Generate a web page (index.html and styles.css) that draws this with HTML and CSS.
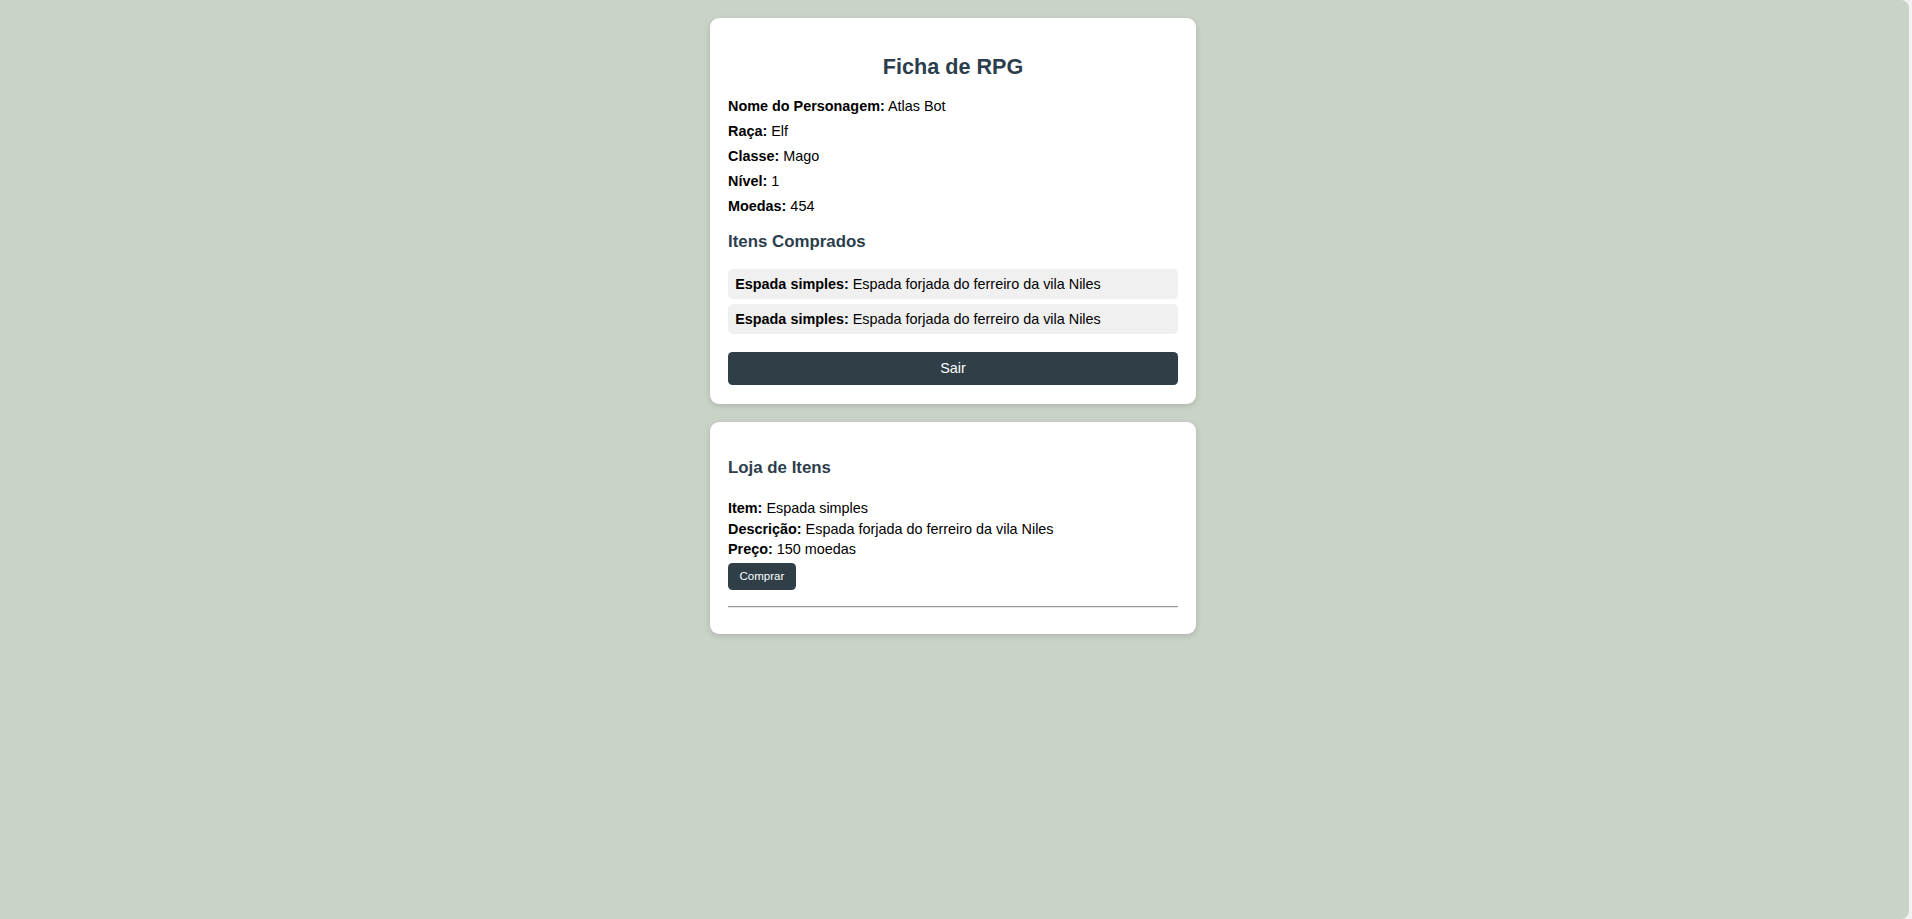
FILE: index.html
```html
<!DOCTYPE html>
<html lang="pt-BR">
<head>
<meta charset="utf-8">
<title>Ficha de RPG</title>
<link rel="stylesheet" href="styles.css">
</head>
<body>
<main class="page">
  <section class="card sheet">
    <h2 class="title">Ficha de RPG</h2>
    <div class="info">
      <p class="line"><strong>Nome do Personagem:</strong> Atlas Bot</p>
      <p class="line"><strong>Raça:</strong> Elf</p>
      <p class="line"><strong>Classe:</strong> Mago</p>
      <p class="line"><strong>Nível:</strong> 1</p>
      <p class="line"><strong>Moedas:</strong> 454</p>
    </div>
    <h3 class="subtitle bought-title">Itens Comprados</h3>
    <ul class="bought">
      <li class="bought-item"><strong>Espada simples:</strong> Espada forjada do ferreiro da vila Niles</li>
      <li class="bought-item"><strong>Espada simples:</strong> Espada forjada do ferreiro da vila Niles</li>
    </ul>
    <button class="btn-exit" type="button">Sair</button>
  </section>

  <section class="card shop">
    <h3 class="subtitle shop-title">Loja de Itens</h3>
    <div class="shop-item">
      <div class="shop-line"><strong>Item:</strong> Espada simples</div>
      <div class="shop-line"><strong>Descrição:</strong> Espada forjada do ferreiro da vila Niles</div>
      <div class="shop-line"><strong>Preço:</strong> 150 moedas</div>
      <button class="btn-buy" type="button">Comprar</button>
      <hr class="divider">
    </div>
  </section>
</main>
</body>
</html>
```

FILE: styles.css
```css
html {
  background: #f2f2f2;
}

body {
  margin: 0 3px 0 0;
  min-height: 100vh;
  background: #cad3c8;
  border-radius: 0 8px 8px 0;
  font-family: "Liberation Sans", Arial, sans-serif;
  font-size: 14.4px;
  color: #000;
}

.page {
  display: flex;
  flex-direction: column;
  align-items: center;
  gap: 18.4px;
  padding: 18px 3px 0 0;
}

.card {
  width: 486px;
  box-sizing: border-box;
  padding: 18px;
  background: #fff;
  border-radius: 9px;
  box-shadow: 0 2px 6px rgba(0, 0, 0, 0.14);
}

.sheet {
  padding-bottom: 18.6px;
}

.title {
  margin: 18px 0 15.2px;
  font-size: 21.6px;
  line-height: 25px;
  font-weight: bold;
  text-align: center;
  color: #2c3e4c;
}

.info {
  display: flex;
  flex-direction: column;
}

.line {
  margin: 0;
  line-height: 25px;
}

.subtitle {
  font-size: 16.85px;
  line-height: 19.5px;
  font-weight: bold;
  color: #2c3e4c;
}

.bought-title {
  margin: 12.9px 0 17.4px;
}

.bought {
  list-style: none;
  margin: 0;
  padding: 0;
  display: flex;
  flex-direction: column;
  gap: 5px;
}

.bought-item {
  background: #f0f0f0;
  border-radius: 5px;
  padding: 0 7.2px;
  line-height: 30px;
}

.btn-exit {
  display: block;
  width: 100%;
  height: 33.6px;
  margin-top: 17.9px;
  padding: 0;
  border: none;
  border-radius: 4.5px;
  background: #303e48;
  color: #fff;
  font-family: inherit;
  font-size: 14.4px;
  line-height: 33.6px;
}

.shop-title {
  margin: 17.6px 0 20.6px;
}

.shop-line {
  line-height: 20.5px;
}

.btn-buy {
  display: block;
  margin-top: 3px;
  height: 27.7px;
  padding: 0 11.5px;
  border: none;
  border-radius: 4.5px;
  background: #303e48;
  color: #fff;
  font-family: inherit;
  font-size: 11.5px;
  line-height: 27.7px;
}

.divider {
  margin: 15.8px 0 7.4px;
  border: none;
  border-top: 1px solid #9c9c9c;
  border-bottom: 1px solid #e6e6e6;
}
```
